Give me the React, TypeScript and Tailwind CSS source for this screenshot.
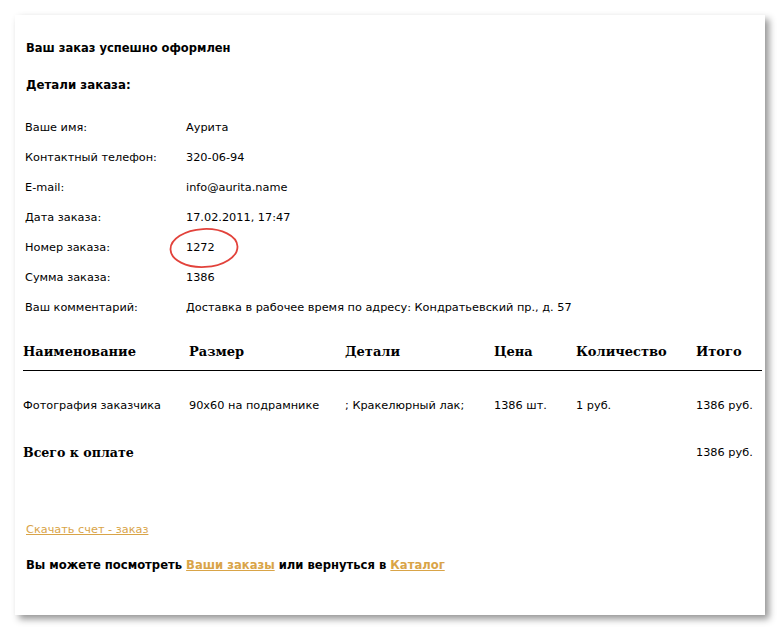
import React from 'react';

const details: [string, string][] = [
  ['Ваше имя:', 'Аурита'],
  ['Контактный телефон:', '320-06-94'],
  ['E-mail:', 'info@aurita.name'],
  ['Дата заказа:', '17.02.2011, 17:47'],
  ['Номер заказа:', '1272'],
  ['Сумма заказа:', '1386'],
  ['Ваш комментарий:', 'Доставка в рабочее время по адресу: Кондратьевский пр., д. 57'],
];

const columns = [
  { title: 'Наименование', w: 'w-[166px]' },
  { title: 'Размер', w: 'w-[156px]' },
  { title: 'Детали', w: 'w-[149px]' },
  { title: 'Цена', w: 'w-[82px]' },
  { title: 'Количество', w: 'w-[120px]' },
  { title: 'Итого', w: 'w-[66px]' },
];

const row = ['Фотография заказчика', '90x60 на подрамнике', '; Кракелюрный лак;', '1386 шт.', '1 руб.', '1386 руб.'];

function Circled({ children }: { children: React.ReactNode }) {
  return (
    <span className="relative inline-block">
      {children}
      <svg className="absolute left-[-17px] top-[-13px] pointer-events-none" width="70" height="42" viewBox="0 0 70 42">
        <ellipse cx="35" cy="21" rx="33.5" ry="19" fill="none" stroke="#e2423b" strokeWidth="1.8" transform="rotate(-3 35 21)" />
      </svg>
    </span>
  );
}

export default function App() {
  return (
    <div className="min-h-screen bg-white p-[15px] font-['DejaVu_Sans',sans-serif] text-[11.3px] text-black">
      <div className="w-[750px] h-[600px] bg-white shadow-[4px_4px_7px_rgba(0,0,0,0.42)] pt-[25px] px-[8px]">
        <div className="px-[3px] font-bold text-[11.5px] leading-4">Ваш заказ успешно оформлен</div>
        <div className="px-[3px] mt-[21px] font-bold text-[11.8px] leading-4">Детали заказа:</div>

        <div className="mt-[20px] px-[2px]">
          {details.map(([label, value]) => (
            <div key={label} className="flex items-center h-[30px]">
              <span className="w-[161px] shrink-0">{label}</span>
              <span>{label === 'Номер заказа:' ? <Circled>{value}</Circled> : value}</span>
            </div>
          ))}
        </div>

        <table className="mt-[11px] border-collapse table-fixed w-[739px]">
          <thead>
            <tr className="border-b border-black font-['DejaVu_Serif',serif] text-[13px]">
              {columns.map((c) => (
                <th key={c.title} className={`${c.w} text-left font-bold h-[36px] align-middle p-0`}>{c.title}</th>
              ))}
            </tr>
          </thead>
          <tbody>
            <tr className="h-[72px]">
              {row.map((cell, i) => (
                <td key={i} className="p-0 align-middle">{cell}</td>
              ))}
            </tr>
            <tr className="h-[22px]">
              <td colSpan={5} className="p-0 font-['DejaVu_Serif',serif] font-bold text-[12.6px]">Всего к оплате</td>
              <td className="p-0">1386 руб.</td>
            </tr>
          </tbody>
        </table>

        <div className="mt-[58px] px-[3px] leading-4">
          <a href="#" className="text-[#d9a448] underline">Скачать счет - заказ</a>
        </div>
        <div className="mt-[19px] px-[3px] font-bold text-[11.6px] leading-4">
          Вы можете посмотреть <a href="#" className="text-[#d9a448] underline">Ваши заказы</a> или вернуться в{' '}
          <a href="#" className="text-[#d9a448] underline">Каталог</a>
        </div>
      </div>
    </div>
  );
}
